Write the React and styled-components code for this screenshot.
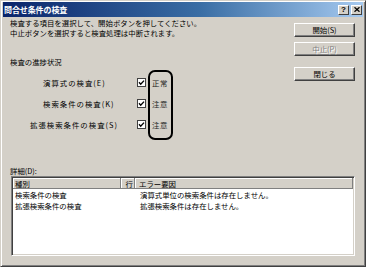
import React from 'react';
import styled, { createGlobalStyle } from 'styled-components';

const GlobalStyle = createGlobalStyle`
  html, body {
    margin: 0;
    padding: 0;
    background: #D4D0C8;
  }
  body {
    font-family: "Noto Sans CJK JP", "DejaVu Sans", sans-serif;
    font-size: 7.4px;
    color: #000;
  }
`;

const Window = styled.div`
  box-sizing: border-box;
  width: 366px;
  height: 267px;
  display: flex;
  flex-direction: column;
  background: #D4D0C8;
  border: 1px solid;
  border-color: #D4D0C8 #404040 #404040 #D4D0C8;
  box-shadow: inset 1px 1px #fff, inset -1px -1px #808080;
  padding: 1px 2px 2px 2px;
`;

const TitleBar = styled.div`
  height: 15px;
  display: flex;
  align-items: center;
  justify-content: space-between;
  padding: 0 1px 0 1px;
  background: linear-gradient(90deg, #0A246A 0%, #3A6EA5 55%, #A6CAF0 100%);
`;

const Title = styled.span`
  color: #fff;
  font-weight: bold;
  font-size: 8px;
  line-height: 15px;
  letter-spacing: -0.1px;
`;

const TitleButtons = styled.div`
  display: flex;
  gap: 2px;
`;

const TitleButton = styled.div`
  box-sizing: border-box;
  width: 11px;
  height: 10px;
  display: flex;
  align-items: center;
  justify-content: center;
  background: #D4D0C8;
  border: 1px solid;
  border-color: #fff #404040 #404040 #fff;
  font-family: "Liberation Sans", sans-serif;
  font-weight: bold;
  font-size: 8px;
  line-height: 8px;
`;

const Body = styled.div`
  flex: 1;
  display: flex;
  flex-direction: column;
  padding: 1px 8px 8px 7px;
`;

const Top = styled.div`
  display: flex;
`;

const Left = styled.div`
  flex: 1;
`;

const Line = styled.p`
  margin: 0;
  line-height: 10px;
  white-space: nowrap;
`;

const SectionLabel = styled.div`
  margin-top: 19px;
  line-height: 10px;
`;

const CheckList = styled.div`
  position: relative;
  margin-top: 5px;
`;

const CheckRow = styled.div`
  display: grid;
  grid-template-columns: 121px 9px auto;
  column-gap: 6px;
  align-items: center;
  height: 21px;
`;

const CheckLabel = styled.span`
  padding-left: ${p => p.$indent}px;
  letter-spacing: 1px;
  white-space: nowrap;
`;

const Status = styled.span`
  color: #222;
  letter-spacing: 0.5px;
`;

const Annotation = styled.div`
  position: absolute;
  left: 138px;
  top: -2px;
  width: 25px;
  height: 70px;
  box-sizing: border-box;
  border: 2px solid #000;
  border-radius: 7px;
  pointer-events: none;
`;

const ButtonColumn = styled.div`
  width: 61px;
  padding-top: 5px;
  display: flex;
  flex-direction: column;
`;

const Button = styled.div`
  box-sizing: border-box;
  height: 14px;
  margin-top: ${p => (p.$spaced ? 11 : p.$first ? 0 : 5)}px;
  display: flex;
  align-items: center;
  justify-content: center;
  background: #D4D0C8;
  border: 1px solid;
  border-color: #fff #404040 #404040 #fff;
  box-shadow: inset -1px -1px #808080;
  color: ${p => (p.$disabled ? '#808080' : '#000')};
  text-shadow: ${p => (p.$disabled ? '1px 1px #fff' : 'none')};
  line-height: 12px;
`;

const DetailsLabel = styled.div`
  margin-top: 31px;
  line-height: 10px;
`;

const ListBox = styled.div`
  flex: 1;
  margin-left: 1px;
  background: #fff;
  border: 1px solid;
  border-color: #808080 #fff #fff #808080;
  box-shadow: inset 1px 1px #404040, inset -1px -1px #D4D0C8;
  padding: 1px;
`;

const Grid = styled.div`
  display: grid;
  grid-template-columns: 108px 14px 1fr;
`;

const HeadCell = styled.div`
  height: 11px;
  line-height: 11px;
  background: #D4D0C8;
  box-shadow: inset -1px -1px #808080, inset 1px 1px #fff;
  padding: 0 ${p => (p.$right ? 2 : 0)}px 0 ${p => p.$pad || 0}px;
  text-align: ${p => (p.$right ? 'right' : 'left')};
  white-space: nowrap;
`;

const Cell = styled.div`
  height: 11px;
  line-height: 11px;
  padding-left: ${p => p.$pad || 0}px;
  white-space: nowrap;
`;

const CheckBox = () => (
  <svg width="9" height="9" viewBox="0 0 9 9">
    <rect x="0.5" y="0.5" width="8" height="8" fill="#fff" stroke="#404040" />
    <path d="M2 4.3 L3.7 6.2 L7 2.6" fill="none" stroke="#000" strokeWidth="1.4" />
  </svg>
);

const checks = [
  { label: '演算式の検査(E)', status: '正常', indent: 33 },
  { label: '検索条件の検査(K)', status: '注意', indent: 33 },
  { label: '拡張検索条件の検査(S)', status: '注意', indent: 20 },
];

const rows = [
  { kind: '検索条件の検査', line: '', cause: '演算式単位の検索条件は存在しません。' },
  { kind: '拡張検索条件の検査', line: '', cause: '拡張検索条件は存在しません。' },
];

export default function App() {
  return (
    <>
      <GlobalStyle />
      <Window>
        <TitleBar>
          <Title>問合せ条件の検査</Title>
          <TitleButtons>
            <TitleButton>?</TitleButton>
            <TitleButton>
              <svg width="6" height="5" viewBox="0 0 6 5">
                <path d="M0.5 0.3 L5.5 4.7 M5.5 0.3 L0.5 4.7" stroke="#000" strokeWidth="1.3" />
              </svg>
            </TitleButton>
          </TitleButtons>
        </TitleBar>
        <Body>
          <Top>
            <Left>
              <Line>検査する項目を選択して、開始ボタンを押してください。</Line>
              <Line>中止ボタンを選択すると検査処理は中断されます。</Line>
              <SectionLabel>検査の進捗状況</SectionLabel>
              <CheckList>
                {checks.map(c => (
                  <CheckRow key={c.label}>
                    <CheckLabel $indent={c.indent}>{c.label}</CheckLabel>
                    <CheckBox />
                    <Status>{c.status}</Status>
                  </CheckRow>
                ))}
                <Annotation />
              </CheckList>
            </Left>
            <ButtonColumn>
              <Button $first>開始(S)</Button>
              <Button $disabled>中止(P)</Button>
              <Button $spaced>閉じる</Button>
            </ButtonColumn>
          </Top>
          <DetailsLabel>詳細(D):</DetailsLabel>
          <ListBox>
            <Grid>
              <HeadCell $pad={2}>種別</HeadCell>
              <HeadCell $right>行</HeadCell>
              <HeadCell $pad={4}>エラー要因</HeadCell>
              {rows.map(r => (
                <React.Fragment key={r.kind}>
                  <Cell $pad={2}>{r.kind}</Cell>
                  <Cell>{r.line}</Cell>
                  <Cell $pad={5}>{r.cause}</Cell>
                </React.Fragment>
              ))}
            </Grid>
          </ListBox>
        </Body>
      </Window>
    </>
  );
}
